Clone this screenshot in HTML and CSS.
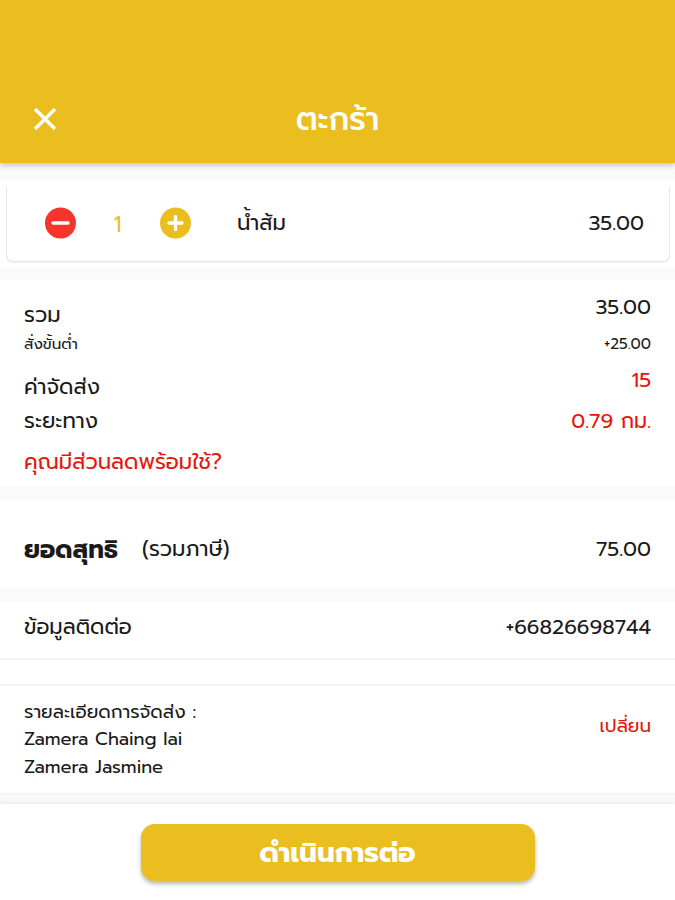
FILE: index.html
```html
<!DOCTYPE html>
<html lang="th">
<head>
    <meta charset="UTF-8">
    <meta name="viewport" content="width=device-width, initial-scale=1.0">
    <title>ตะกร้า</title>
    <link rel="stylesheet" href="styles.css">
</head>
<body>
    <header class="header">
        <button class="close" aria-label="Close">
            <svg width="24" height="24" viewBox="0 0 24 24"><path d="M2 2L22 22M22 2L2 22" stroke="#fff" stroke-width="3.4" fill="none"/></svg>
        </button>
        <h1>ตะกร้า</h1>
    </header>

    <main>
        <div class="item-wrap">
            <div class="item">
                <svg width="32" height="32" viewBox="0 0 32 32"><circle cx="16.5" cy="16" r="15.5" fill="#f3352b"/><path d="M9 16H24" stroke="#fff" stroke-width="3.4" stroke-linecap="round"/></svg>
                <span class="qty">1</span>
                <svg width="32" height="32" viewBox="0 0 32 32"><circle cx="16.5" cy="16" r="15.5" fill="#eabe1e"/><path d="M10 16H23M16.5 9.5V22.5" stroke="#fff" stroke-width="3.4" stroke-linecap="round"/></svg>
                <span class="item-name">น้ำส้ม</span>
                <span class="price">35.00</span>
            </div>
        </div>

        <section class="summary">
            <div class="row row-sum"><span>รวม</span><span class="price">35.00</span></div>
            <div class="row row-min"><span>สั่งขั้นต่ำ</span><span class="price">+25.00</span></div>
            <div class="row row-fee"><span>ค่าจัดส่ง</span><span class="price red">15</span></div>
            <div class="row row-dist"><span>ระยะทาง</span><span class="price red">0.79 กม.</span></div>
            <div class="row row-promo"><a class="red">คุณมีส่วนลดพร้อมใช้?</a></div>
        </section>

        <section class="row total">
            <strong>ยอดสุทธิ</strong>
            <span class="tax">(รวมภาษี)</span>
            <span class="price">75.00</span>
        </section>

        <section class="row contact">
            <span>ข้อมูลติดต่อ</span>
            <span class="price">+66826698744</span>
        </section>

        <section class="row delivery">
            <div class="address">
                <p class="address-title">รายละเอียดการจัดส่ง :</p>
                <p>Zamera Chaing lai</p>
                <p>Zamera Jasmine</p>
            </div>
            <a class="change red">เปลี่ยน</a>
        </section>
    </main>

    <footer class="footer">
        <button class="next">ดำเนินการต่อ</button>
    </footer>
</body>
</html>
```
FILE: styles.css
```css
* {
    box-sizing: border-box;
}
body {
    margin: 0;
    height: 900px;
    display: flex;
    flex-direction: column;
    overflow: hidden;
    background: #fafafa;
    color: #1a1a1a;
    font-family: Prompt, Kanit, "Noto Sans", "Noto Sans Thai", sans-serif;
    font-size: 21.3px;
}
button {
    border: none;
    padding: 0;
    background: none;
    font-family: inherit;
}
svg {
    display: block;
    flex: none;
}
span, a, strong {
    white-space: nowrap;
}
.red {
    color: #e6160f;
}
.header {
    display: grid;
    grid-template-columns: 90px 1fr 90px;
    align-items: center;
    height: 163px;
    padding-top: 75px;
    background: #eabe1e;
    box-shadow: 0 2px 6px rgba(0,0,0,0.25);
    z-index: 1;
}
.close {
    margin-left: 33px;
}
h1 {
    margin: 1px 0 0;
    text-align: center;
    color: #fff;
    font-size: 32px;
    font-weight: 500;
}
main {
    background: #fafafa;
}
.item-wrap {
    height: 105px;
    padding: 24px 5px 6px 6px;
    background: linear-gradient(#fafafa 17px, #fff 17px);
}
.item {
    display: flex;
    align-items: center;
    height: 75px;
    padding: 0 25px 3px 37px;
    border: 1px solid #e6e6e6;
    border-top: none;
    border-radius: 0 0 7px 7px;
    box-shadow: 0 1px 1px rgba(0,0,0,0.06);
    background: #fff;
}
.qty {
    width: 83px;
    padding-top: 4px;
    text-align: center;
    color: #eabe1e;
    font-size: 21px;
}
.item-name {
    margin-left: 46px;
}
.price {
    margin-left: auto;
    font-size: 20.8px;
}
.row {
    display: flex;
    align-items: center;
    padding: 0 24px;
    background: #fff;
}
.summary {
    height: 206px;
    margin-top: 12px;
    padding-top: 16px;
    background: #fff;
}
.row-sum {
    height: 38px;
}
.row-sum .price {
    margin-top: -16px;
}
.row-min,
.row-min .price {
    height: 20px;
    font-size: 15.2px;
    line-height: 20px;
}
.row-fee {
    height: 66px;
}
.row-fee .price {
    margin-top: -14px;
}
.row-dist {
    height: 2px;
}
.row-promo {
    height: 44px;
    margin-top: 18px;
}
.total {
    height: 88px;
    margin-top: 14px;
    padding-top: 10px;
}
.total strong {
    font-size: 24.6px;
}
.total .tax {
    margin-left: 24px;
}
.contact {
    height: 58px;
    margin-top: 14px;
    padding-bottom: 6px;
    border-bottom: 2px solid #f5f5f5;
}
.delivery {
    height: 135px;
    padding-top: 25px;
    border-bottom: 2px solid #f5f5f5;
    background: linear-gradient(#fff 24px, #f5f5f5 24px, #f5f5f5 26px, #fff 26px);
}
.address {
    font-size: 18.2px;
}
.address p {
    margin: 0;
    height: 27.5px;
    line-height: 28px;
}
.address .address-title {
    font-size: 18.4px;
}
.change {
    margin-left: auto;
    margin-bottom: 27px;
    font-size: 18.4px;
}
.footer {
    flex: 1;
    margin-top: 9px;
    padding-top: 20px;
    background: #fff;
    box-shadow: 0 -1px 5px rgba(0,0,0,0.08);
}
.next {
    display: block;
    width: 394px;
    height: 57px;
    margin: 0 auto;
    padding-top: 1px;
    border-radius: 14px;
    background: #eabe1e;
    box-shadow: 0 3px 4px rgba(0,0,0,0.28);
    color: #fff;
    font-size: 27.8px;
    font-weight: 700;
}
```
